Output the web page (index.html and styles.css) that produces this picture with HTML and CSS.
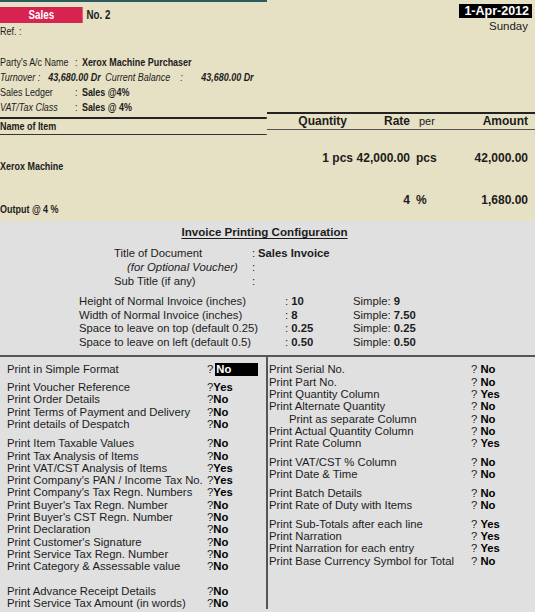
FILE: index.html
```html
<!DOCTYPE html>
<html lang="en">
<head>
    <meta charset="UTF-8">
    <title>Sales Voucher - Invoice Printing Configuration</title>
    <link rel="stylesheet" href="styles.css">
</head>
<body>
    <div class="voucher">
        <div class="v-left">
            <div class="topline"></div>
            <div class="narrow">
                <div class="vhead">
                    <span class="vtype">Sales</span>
                    <span class="vno">No. 2</span>
                </div>
                <div class="ref">Ref. :</div>

                <div class="party">
                    <div class="prow"><span class="lbl">Party's A/c Name</span><span class="col">:</span><b>Xerox Machine Purchaser</b></div>
                    <div class="prow turnover">
                        <span class="t1">Turnover :</span>
                        <span class="t2">43,680.00 Dr</span>
                        <span class="t3">Current Balance</span>
                        <span class="t4">:</span>
                        <span class="t5">43,680.00 Dr</span>
                    </div>
                    <div class="prow"><span class="lbl">Sales Ledger</span><span class="col">:</span><b>Sales @4%</b></div>
                    <div class="prow"><span class="lbl"><i>VAT/Tax Class</i></span><span class="col">:</span><b>Sales @ 4%</b></div>
                </div>

                <div class="colhead-left">Name of Item</div>
                <div class="item-name">Xerox Machine</div>
                <div class="tax-name">Output @ 4 %</div>
            </div>
        </div>

        <div class="v-right">
            <div class="vdate"><span class="date">1-Apr-2012</span></div>
            <div class="day">Sunday</div>

            <div class="grid colhead-right">
                <span class="qty">Quantity</span>
                <span class="rate">Rate</span>
                <span class="per">per</span>
                <span class="amt">Amount</span>
            </div>
            <div class="grid item-row">
                <span class="qty">1 pcs</span>
                <span class="rate">42,000.00</span>
                <span class="per">pcs</span>
                <span class="amt">42,000.00</span>
            </div>
            <div class="grid tax-row">
                <span class="qty"></span>
                <span class="rate">4</span>
                <span class="per">%</span>
                <span class="amt">1,680.00</span>
            </div>
        </div>
    </div>

    <div class="config">
        <div class="cfg-title"><span>Invoice Printing Configuration</span></div>

        <div class="doc-block">
            <span>Title of Document</span><span>:</span><b>Sales Invoice</b>
            <span class="opt">(for Optional Voucher)</span><span>:</span><span></span>
            <span>Sub Title (if any)</span><span>:</span><span></span>
        </div>

        <div class="dims">
            <span>Height of Normal Invoice (inches)</span><span>: <b>10</b></span><span>Simple: <b>9</b></span>
            <span>Width of Normal Invoice (inches)</span><span>: <b>8</b></span><span>Simple: <b>7.50</b></span>
            <span>Space to leave on top (default 0.25)</span><span>: <b>0.25</b></span><span>Simple: <b>0.25</b></span>
            <span>Space to leave on left (default 0.5)</span><span>: <b>0.50</b></span><span>Simple: <b>0.50</b></span>
        </div>

        <div class="opts">
            <div class="opts-left">
                <div class="grp g1">
                    <div class="opt-row"><span>Print in Simple Format</span><span>?<b class="hl">No</b></span></div>
                </div>
                <div class="grp g2">
                    <div class="opt-row"><span>Print Voucher Reference</span><span>?<b>Yes</b></span></div>
                    <div class="opt-row"><span>Print Order Details</span><span>?<b>No</b></span></div>
                    <div class="opt-row"><span>Print Terms of Payment and Delivery</span><span>?<b>No</b></span></div>
                    <div class="opt-row"><span>Print details of Despatch</span><span>?<b>No</b></span></div>
                </div>
                <div class="grp g3">
                    <div class="opt-row"><span>Print Item Taxable Values</span><span>?<b>No</b></span></div>
                    <div class="opt-row"><span>Print Tax Analysis of Items</span><span>?<b>No</b></span></div>
                    <div class="opt-row"><span>Print VAT/CST Analysis of Items</span><span>?<b>Yes</b></span></div>
                    <div class="opt-row"><span>Print Company's PAN / Income Tax No.</span><span>?<b>Yes</b></span></div>
                    <div class="opt-row"><span>Print Company's Tax Regn. Numbers</span><span>?<b>Yes</b></span></div>
                    <div class="opt-row"><span>Print Buyer's Tax Regn. Number</span><span>?<b>No</b></span></div>
                    <div class="opt-row"><span>Print Buyer's CST Regn. Number</span><span>?<b>No</b></span></div>
                    <div class="opt-row"><span>Print Declaration</span><span>?<b>No</b></span></div>
                    <div class="opt-row"><span>Print Customer's Signature</span><span>?<b>No</b></span></div>
                    <div class="opt-row"><span>Print Service Tax Regn. Number</span><span>?<b>No</b></span></div>
                    <div class="opt-row"><span>Print Category &amp; Assessable value</span><span>?<b>No</b></span></div>
                </div>
                <div class="grp g4">
                    <div class="opt-row"><span>Print Advance Receipt Details</span><span>?<b>No</b></span></div>
                    <div class="opt-row"><span>Print Service Tax Amount (in words)</span><span>?<b>No</b></span></div>
                </div>
            </div>

            <div class="opts-right">
                <div class="grp g1">
                    <div class="opt-row"><span>Print Serial No.</span><span>? <b>No</b></span></div>
                    <div class="opt-row"><span>Print Part No.</span><span>? <b>No</b></span></div>
                    <div class="opt-row"><span>Print Quantity Column</span><span>? <b>Yes</b></span></div>
                    <div class="opt-row"><span>Print Alternate Quantity</span><span>? <b>No</b></span></div>
                    <div class="opt-row"><span class="sub">Print as separate Column</span><span>? <b>No</b></span></div>
                    <div class="opt-row"><span>Print Actual Quantity Column</span><span>? <b>No</b></span></div>
                    <div class="opt-row"><span>Print Rate Column</span><span>? <b>Yes</b></span></div>
                </div>
                <div class="grp gr">
                    <div class="opt-row"><span>Print VAT/CST % Column</span><span>? <b>No</b></span></div>
                    <div class="opt-row"><span>Print Date &amp; Time</span><span>? <b>No</b></span></div>
                </div>
                <div class="grp gr">
                    <div class="opt-row"><span>Print Batch Details</span><span>? <b>No</b></span></div>
                    <div class="opt-row"><span>Print Rate of Duty with Items</span><span>? <b>No</b></span></div>
                </div>
                <div class="grp gr">
                    <div class="opt-row"><span>Print Sub-Totals after each line</span><span>? <b>Yes</b></span></div>
                    <div class="opt-row"><span>Print Narration</span><span>? <b>Yes</b></span></div>
                    <div class="opt-row"><span>Print Narration for each entry</span><span>? <b>Yes</b></span></div>
                    <div class="opt-row"><span>Print Base Currency Symbol for Total</span><span>? <b>No</b></span></div>
                </div>
            </div>
        </div>
    </div>
</body>
</html>
```
FILE: styles.css
```css
html, body {
    margin: 0;
    padding: 0;
}
body {
    width: 535px;
    height: 612px;
    overflow: hidden;
    background: #e0e0e0;
    color: #1c1c1c;
    font-family: "Liberation Sans", Arial, sans-serif;
}

/* ---- voucher (top part) ---- */
.voucher {
    display: flex;
    height: 221px;
    background: #e6e0c4;
}
.v-left {
    width: 267px;
    flex-shrink: 0;
    font-size: 11.5px;
}
/* no narrow face installed: squeeze the regular one */
.narrow {
    width: 342px;
    transform: scaleX(0.78);
    transform-origin: 0 0;
}
.v-right {
    width: 268px;
    font-size: 12px;
}
.topline {
    height: 2px;
    background: #2b5b5e;
}
.vhead {
    display: flex;
    align-items: center;
    margin-top: 5px;
    height: 16px;
}
.vtype {
    width: 106px;
    height: 16px;
    line-height: 16px;
    background: #d72350;
    color: #fff;
    text-align: center;
    font-size: 12.5px;
    font-weight: bold;
}
.vno {
    margin-left: 5px;
    font-size: 12.5px;
    font-weight: bold;
}
.ref {
    height: 16px;
    line-height: 16px;
}
.party {
    margin-top: 16px;
    line-height: 15px;
}
.prow {
    display: flex;
    white-space: nowrap;
}
.prow .lbl {
    width: 96px;
}
.prow .col {
    width: 9px;
}
.turnover {
    font-style: italic;
}
.turnover .t1 { width: 62px; }
.turnover .t2 { width: 73px; font-weight: bold; }
.turnover .t3 { width: 96px; }
.turnover .t4 { width: 27px; }
.turnover .t5 { font-weight: bold; }

.colhead-left {
    margin-top: 2px;
    border-top: 2px solid #222;
    border-bottom: 1px solid #333;
    line-height: 15px;
    font-weight: bold;
}
.item-name {
    margin-top: 24px;
    line-height: 15px;
    font-weight: bold;
}
.tax-name {
    margin-top: 28px;
    line-height: 15px;
    font-weight: bold;
}

.vdate {
    margin-top: 4px;
    text-align: right;
    padding-right: 3px;
}
.date {
    display: inline-block;
    height: 14px;
    line-height: 14px;
    padding: 0 3px 0 5px;
    background: #000;
    color: #fff;
    font-weight: bold;
    font-size: 12.5px;
}
.day {
    margin-top: 1px;
    line-height: 14px;
    text-align: right;
    padding-right: 7px;
    font-size: 11.5px;
}
.grid {
    display: grid;
    grid-template-columns: 86px 57px 30px 88px;
    line-height: 15px;
    font-weight: bold;
    white-space: nowrap;
}
.grid .qty, .grid .rate, .grid .amt {
    text-align: right;
}
.grid .per {
    padding-left: 6px;
}
.colhead-right {
    margin-top: 79px;
    border-top: 2px solid #222;
    border-bottom: 1px solid #555;
}
.colhead-right .qty {
    padding-right: 6px;
}
.colhead-right .per {
    padding-left: 9px;
    font-weight: normal;
    font-size: 11px;
}
.item-row {
    margin-top: 21px;
}
.tax-row {
    margin-top: 27px;
}

/* ---- invoice printing configuration ---- */
.config {
    font-size: 11.3px;
}
.cfg-title {
    padding-top: 4px;
    padding-right: 6px;
    line-height: 14px;
    text-align: center;
    font-weight: bold;
    font-size: 11.6px;
}
.cfg-title span {
    text-decoration: underline;
    text-underline-offset: 2px;
}
.doc-block {
    margin-top: 7px;
    margin-left: 114px;
    display: grid;
    grid-template-columns: 138px 6px auto;
    line-height: 14px;
}
.doc-block .opt {
    padding-left: 13px;
    font-style: italic;
}
.dims {
    margin-top: 7px;
    margin-left: 79px;
    display: grid;
    grid-template-columns: 206px 68px auto;
    line-height: 13.6px;
}
.opts {
    margin-top: 6px;
    display: flex;
    border-top: 2px solid #555;
}
.opts-left {
    width: 266px;
    padding-top: 6px;
}
.opts-right {
    flex: 1;
    border-left: 2px solid #555;
    padding-top: 6px;
}
.opt-row {
    display: grid;
    line-height: 12.3px;
    white-space: nowrap;
}
.opts-left .opt-row {
    grid-template-columns: 200px auto;
    padding-left: 7px;
}
.opts-right .opt-row {
    grid-template-columns: 202px auto;
    padding-left: 1px;
}
.opt-row b {
    color: #000;
}
.opt-row .sub {
    padding-left: 20px;
}
.hl {
    display: inline-block;
    width: 42px;
    margin-left: 2px;
    padding-left: 1px;
    background: #000;
    color: #fff !important;
}
.opts-left .g2 { margin-top: 5.4px; }
.opts-left .g3 { margin-top: 7px; }
.opts-left .g4 { margin-top: 12px; }
.opts-right .gr { margin-top: 6.4px; }
```
